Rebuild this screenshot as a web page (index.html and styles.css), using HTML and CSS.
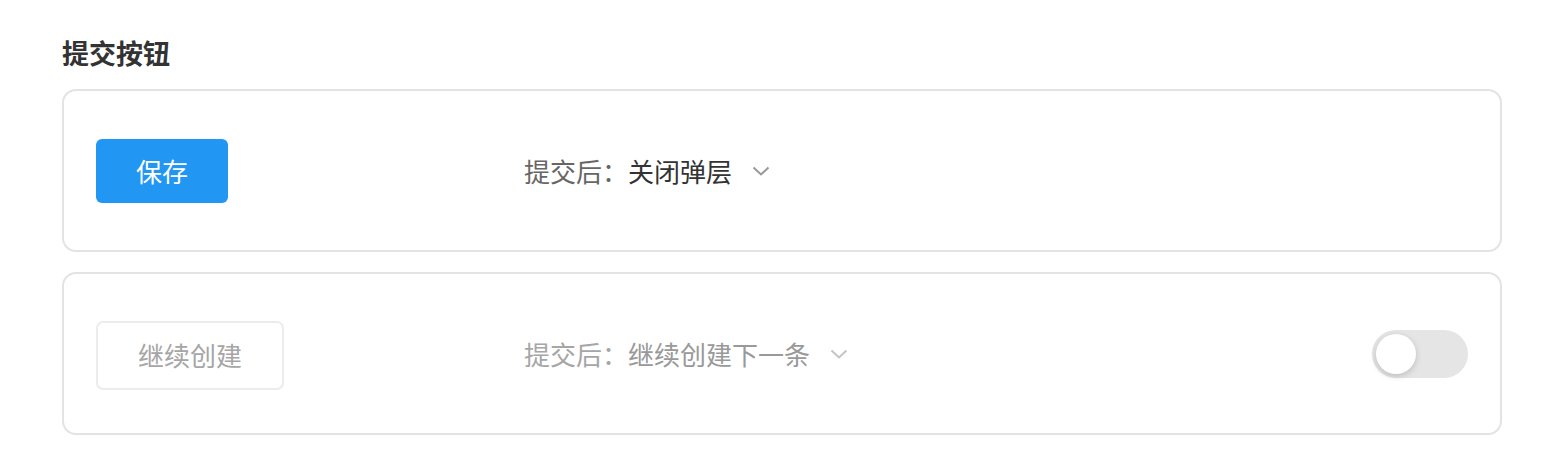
FILE: index.html
```html
<!DOCTYPE html>
<html lang="zh-CN">

<head>
    <meta charset="UTF-8">
    <meta name="viewport" content="width=device-width, initial-scale=1.0">
    <title>提交按钮</title>
    <link rel="stylesheet" href="styles.css">
</head>

<body>
    <section class="submit-section">
        <h2 class="section-title">提交按钮</h2>

        <div class="submit-card">
            <div class="btn-cell">
                <button type="button" class="btn btn-primary">保存</button>
            </div>
            <div class="after-submit">
                <span class="after-label">提交后：</span>
                <span class="after-value">关闭弹层</span>
                <svg class="chevron" width="18" height="10" viewBox="0 0 18 10">
                    <path d="M1.5 1.5 L9 8.5 L16.5 1.5" fill="none" stroke="currentColor" stroke-width="2" />
                </svg>
            </div>
        </div>

        <div class="submit-card is-disabled">
            <div class="btn-cell">
                <button type="button" class="btn btn-default">继续创建</button>
            </div>
            <div class="after-submit">
                <span class="after-label">提交后：</span>
                <span class="after-value">继续创建下一条</span>
                <svg class="chevron" width="18" height="10" viewBox="0 0 18 10">
                    <path d="M1.5 1.5 L9 8.5 L16.5 1.5" fill="none" stroke="currentColor" stroke-width="2" />
                </svg>
            </div>
            <span class="switch"><span class="switch-knob"></span></span>
        </div>
    </section>
</body>

</html>
```

FILE: styles.css
```css
:root {
    --primary-color: #2196f3;
    --border-color: #e3e3e3;
    --title-color: #333333;
    --text-color: #333333;
    --muted-color: #666666;
    --disabled-color: #a6a6a6;
}

body {
    margin: 0;
    font-family: "Noto Sans CJK SC", "Noto Sans", sans-serif;
    background-color: #fff;
    color: var(--text-color);
}

.submit-section {
    padding: 34px 43px 0 62px;
}

.section-title {
    margin: 0 0 17px;
    font-size: 27px;
    line-height: 38px;
    font-weight: 700;
    color: var(--title-color);
}

.submit-card {
    display: flex;
    align-items: center;
    height: 159px;
    padding: 0 32px;
    border: 2px solid var(--border-color);
    border-radius: 14px;
    margin-bottom: 20px;
}

.btn-cell {
    width: 428px;
    flex-shrink: 0;
}

.btn {
    font-family: inherit;
    font-size: 26px;
    line-height: 36px;
    padding: 14px 40px;
    border-radius: 6px;
    cursor: pointer;
}

.btn-primary {
    background-color: var(--primary-color);
    color: #fff;
    border: none;
}

.btn-default {
    background-color: #fff;
    color: var(--disabled-color);
    border: 2px solid #ececec;
    padding: 14px 40px 15px;
    border-radius: 7px;
    margin-top: 3px;
}

.after-submit {
    display: flex;
    align-items: center;
    font-size: 26px;
    flex: 1;
}

.after-label {
    color: var(--muted-color);
}

.after-value {
    color: var(--text-color);
}

.chevron {
    margin-left: 20px;
    color: #999;
}

.is-disabled .after-label {
    color: var(--disabled-color);
}

.is-disabled .after-value {
    color: #999;
}

.is-disabled .chevron {
    color: #c4c4c4;
}

.switch {
    display: flex;
    align-items: center;
    width: 96px;
    height: 48px;
    border-radius: 24px;
    background-color: #e5e5e5;
    padding: 0 4px;
    box-sizing: border-box;
}

.switch-knob {
    width: 40px;
    height: 40px;
    border-radius: 50%;
    background-color: #fff;
    box-shadow: 0 2px 6px rgba(0, 0, 0, 0.18);
}
```
